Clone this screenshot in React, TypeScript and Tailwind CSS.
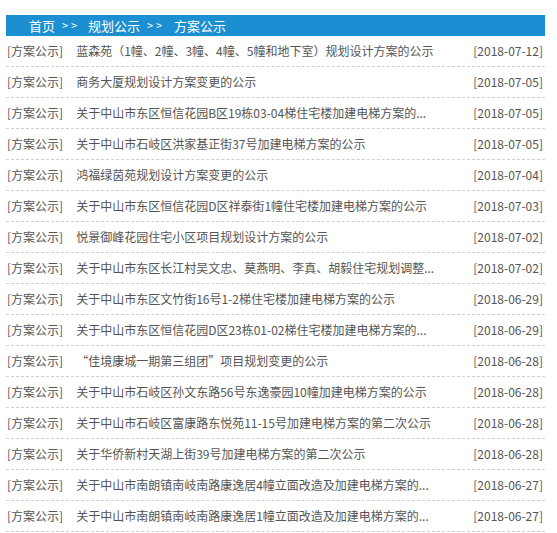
import React from "react";

const rows: [string, string][] = [
  ["蓝森苑（1幢、2幢、3幢、4幢、5幢和地下室）规划设计方案的公示", "2018-07-12"],
  ["商务大厦规划设计方案变更的公示", "2018-07-05"],
  ["关于中山市东区恒信花园B区19栋03-04梯住宅楼加建电梯方案的...", "2018-07-05"],
  ["关于中山市石岐区洪家基正街37号加建电梯方案的公示", "2018-07-05"],
  ["鸿福绿茵苑规划设计方案变更的公示", "2018-07-04"],
  ["关于中山市东区恒信花园D区祥泰街1幢住宅楼加建电梯方案的公示", "2018-07-03"],
  ["悦景御峰花园住宅小区项目规划设计方案的公示", "2018-07-02"],
  ["关于中山市东区长江村吴文忠、莫燕明、李真、胡毅住宅规划调整...", "2018-07-02"],
  ["关于中山市东区文竹街16号1-2梯住宅楼加建电梯方案的公示", "2018-06-29"],
  ["关于中山市东区恒信花园D区23栋01-02梯住宅楼加建电梯方案的...", "2018-06-29"],
  ["“佳境康城一期第三组团”项目规划变更的公示", "2018-06-28"],
  ["关于中山市石岐区孙文东路56号东逸豪园10幢加建电梯方案的公示", "2018-06-28"],
  ["关于中山市石岐区富康路东悦苑11-15号加建电梯方案的第二次公示", "2018-06-28"],
  ["关于华侨新村天湖上街39号加建电梯方案的第二次公示", "2018-06-28"],
  ["关于中山市南朗镇南岐南路康逸居4幢立面改造及加建电梯方案的...", "2018-06-27"],
  ["关于中山市南朗镇南岐南路康逸居1幢立面改造及加建电梯方案的...", "2018-06-27"],
];

function Sep() {
  return (
    <span className="w-[15px] flex justify-between text-[11px] leading-none">
      <span>&gt;</span>
      <span>&gt;</span>
    </span>
  );
}

export default function App() {
  return (
    <div
      className="w-[557px] h-[533px] bg-white overflow-hidden pl-[6px] pr-[12px] pt-[15px]"
      style={{ fontFamily: '"Noto Sans CJK SC", "Noto Sans", sans-serif' }}
    >
      <div className="h-[21px] bg-[#1b8fd2] text-white text-[13px] leading-[21px] pl-[23px] flex items-center">
        <span>首页</span>
        <span className="ml-[7px] flex items-center">
          <Sep />
        </span>
        <span className="ml-[11px]">规划公示</span>
        <span className="ml-[7px] flex items-center">
          <Sep />
        </span>
        <span className="ml-[12px]">方案公示</span>
      </div>
      <div>
        {rows.map(([title, date], i) => (
          <div
            key={i}
            className="h-[31px] border-b border-dashed border-[#cfcfcf] flex items-center justify-between text-[12px] text-[#555] pl-[1px] pr-[2px]"
          >
            <div className="flex items-center whitespace-nowrap">
              <span>[方案公示]</span>
              <span className="ml-[13px]">{title}</span>
            </div>
            <span className="whitespace-nowrap">[{date}]</span>
          </div>
        ))}
      </div>
    </div>
  );
}
